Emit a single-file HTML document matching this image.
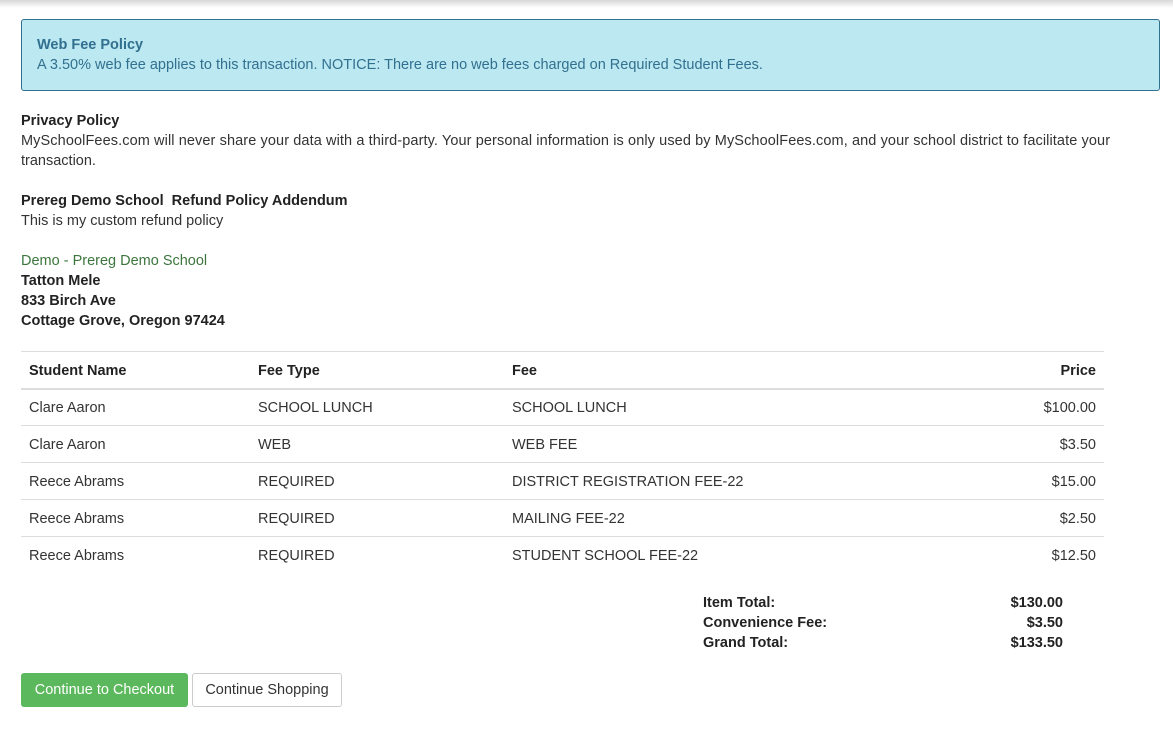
<!DOCTYPE html>
<html><head><style>
body{margin:0;width:1173px;height:730px;background:#fff;font-family:"Liberation Sans",Arial,sans-serif;font-size:14.5px;color:#333;position:relative;overflow:hidden}
.shadow{position:absolute;left:0;top:0;width:1173px;height:8px;background:linear-gradient(#d8d8d8,#fff)}
.a{position:absolute;white-space:nowrap;line-height:20px}
.alert{position:absolute;left:21px;top:19px;width:1137px;height:70px;background:#bce8f1;border:1px solid #31708f;border-radius:3px}
.b{font-weight:bold;color:#222}
.line{position:absolute;left:21px;width:1083px;height:1px;background:#ddd}
.r{text-align:right}
.btn{position:absolute;top:673px;height:32px;line-height:32px;border-radius:3px;text-align:center;font-size:14.5px}
</style></head><body>
<div class="shadow"></div>
<div class="alert"></div>
<div class="a" style="left:37px;top:35px;color:#31708f;font-weight:bold">Web Fee Policy</div>
<div class="a" style="left:37px;top:55px;color:#31708f">A 3.50% web fee applies to this transaction. NOTICE: There are no web fees charged on Required Student Fees.</div>

<div class="a b" style="left:21px;top:111px">Privacy Policy</div>
<div class="a" style="left:21px;top:131px;letter-spacing:0.1px">MySchoolFees.com will never share your data with a third-party. Your personal information is only used by MySchoolFees.com, and your school district to facilitate your</div>
<div class="a" style="left:21px;top:151px">transaction.</div>

<div class="a b" style="left:21px;top:191px">Prereg Demo School&nbsp; Refund Policy Addendum</div>
<div class="a" style="left:21px;top:211px">This is my custom refund policy</div>

<div class="a" style="left:21px;top:251px;color:#3c763d">Demo - Prereg Demo School</div>
<div class="a b" style="left:21px;top:271px">Tatton Mele</div>
<div class="a b" style="left:21px;top:291px">833 Birch Ave</div>
<div class="a b" style="left:21px;top:311px">Cottage Grove, Oregon 97424</div>

<div class="line" style="top:351px"></div>
<div class="line" style="top:388px;height:2px"></div>
<div class="line" style="top:425px"></div>
<div class="line" style="top:462px"></div>
<div class="line" style="top:499px"></div>
<div class="line" style="top:536px"></div>

<div class="a b" style="left:29px;top:361px">Student Name</div>
<div class="a b" style="left:258px;top:361px">Fee Type</div>
<div class="a b" style="left:512px;top:361px">Fee</div>
<div class="a b r" style="left:996px;width:100px;top:361px">Price</div>

<div class="a" style="left:29px;top:398px">Clare Aaron</div><div class="a" style="left:258px;top:398px">SCHOOL LUNCH</div><div class="a" style="left:512px;top:398px">SCHOOL LUNCH</div><div class="a r" style="left:996px;width:100px;top:398px">$100.00</div>
<div class="a" style="left:29px;top:435px">Clare Aaron</div><div class="a" style="left:258px;top:435px">WEB</div><div class="a" style="left:512px;top:435px">WEB FEE</div><div class="a r" style="left:996px;width:100px;top:435px">$3.50</div>
<div class="a" style="left:29px;top:472px">Reece Abrams</div><div class="a" style="left:258px;top:472px">REQUIRED</div><div class="a" style="left:512px;top:472px">DISTRICT REGISTRATION FEE-22</div><div class="a r" style="left:996px;width:100px;top:472px">$15.00</div>
<div class="a" style="left:29px;top:509px">Reece Abrams</div><div class="a" style="left:258px;top:509px">REQUIRED</div><div class="a" style="left:512px;top:509px">MAILING FEE-22</div><div class="a r" style="left:996px;width:100px;top:509px">$2.50</div>
<div class="a" style="left:29px;top:546px">Reece Abrams</div><div class="a" style="left:258px;top:546px">REQUIRED</div><div class="a" style="left:512px;top:546px">STUDENT SCHOOL FEE-22</div><div class="a r" style="left:996px;width:100px;top:546px">$12.50</div>

<div class="a b" style="left:703px;top:593px">Item Total:</div><div class="a b r" style="left:963px;width:100px;top:593px">$130.00</div>
<div class="a b" style="left:703px;top:613px">Convenience Fee:</div><div class="a b r" style="left:963px;width:100px;top:613px">$3.50</div>
<div class="a b" style="left:703px;top:633px">Grand Total:</div><div class="a b r" style="left:963px;width:100px;top:633px">$133.50</div>

<div class="btn" style="left:21px;width:167px;background:#5cb85c;color:#fff;border:0;height:34px;line-height:34px">Continue to Checkout</div>
<div class="btn" style="left:192px;width:148px;border:1px solid #ccc;color:#333;background:#fff">Continue Shopping</div>
</body></html>
